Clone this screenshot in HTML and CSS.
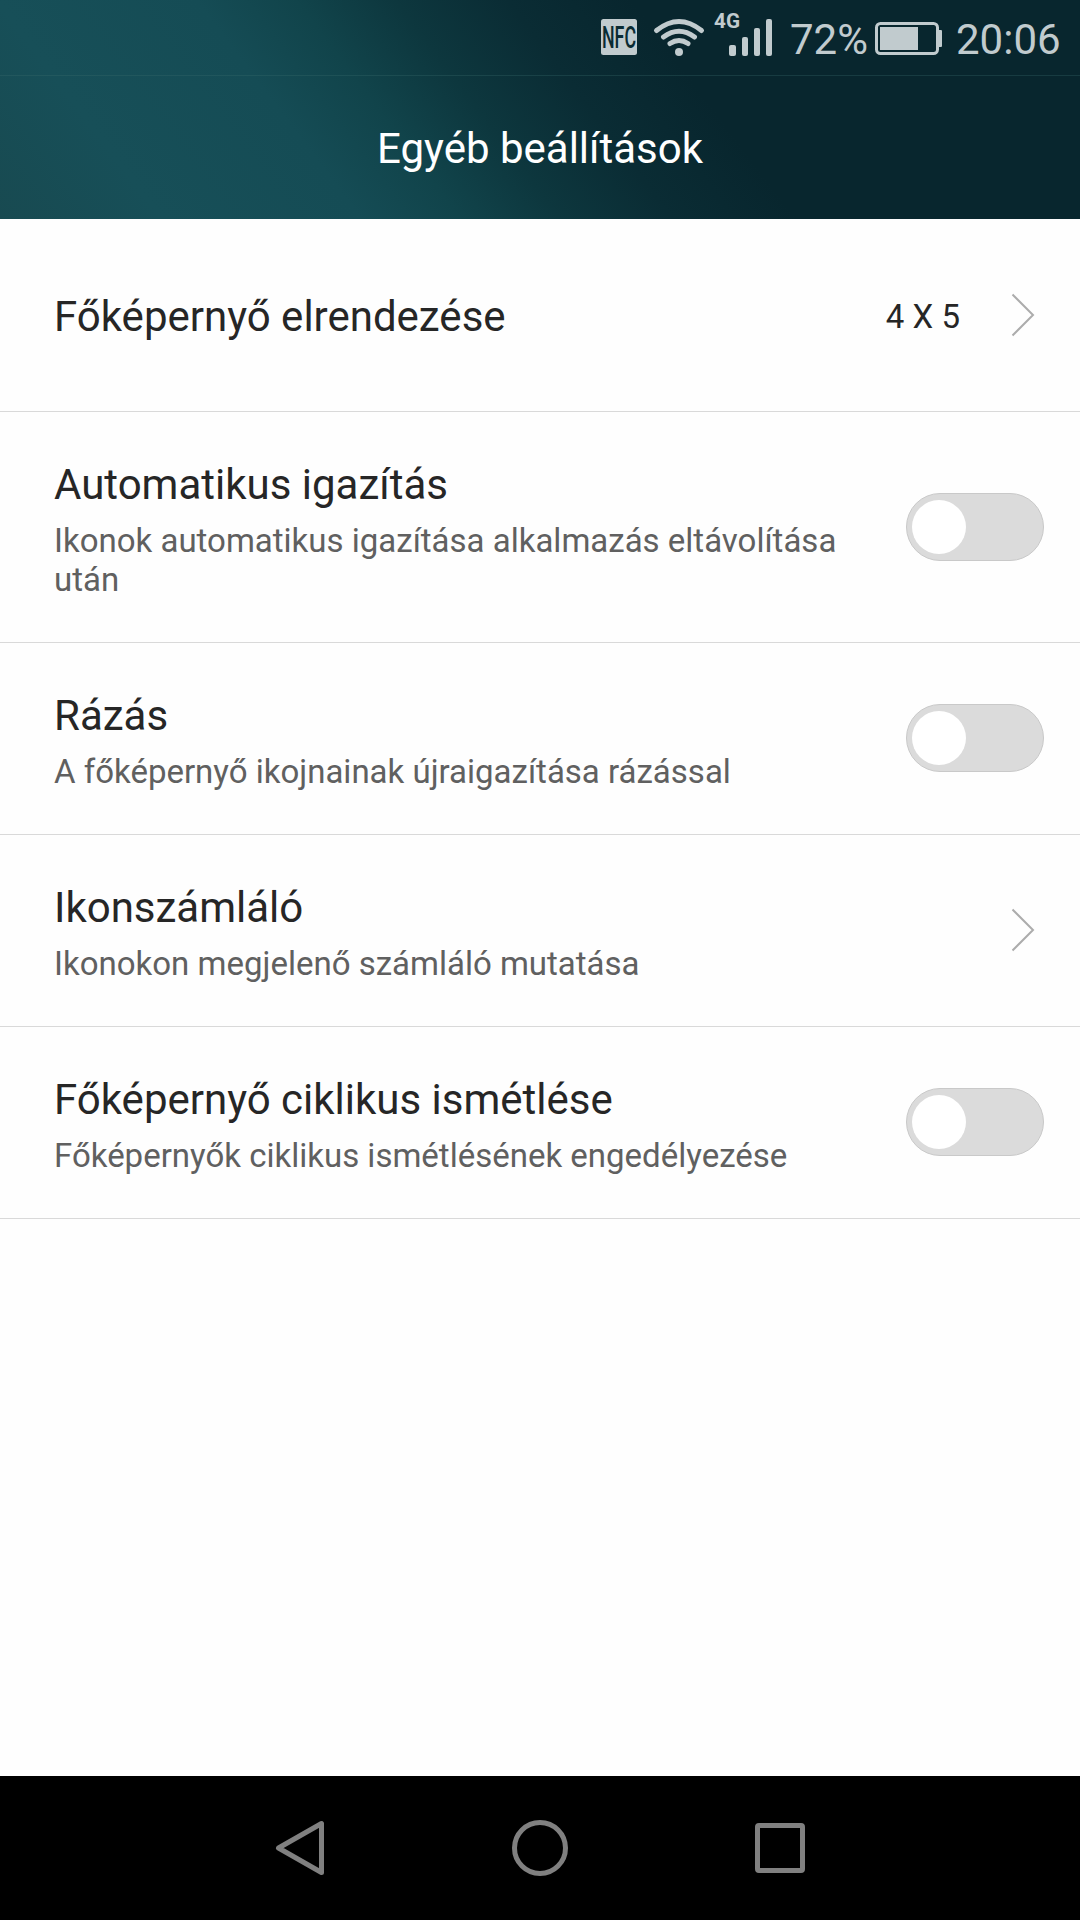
FILE: index.html
```html
<!DOCTYPE html>
<html lang="hu">
<head>
    <meta charset="UTF-8">
    <meta name="viewport" content="width=device-width, initial-scale=1.0">
    <title>Egyéb beállítások</title>
    <link rel="stylesheet" href="styles.css">
</head>
<body>
    <header class="header">
        <div class="status-bar">
            <svg class="status-icons" width="171" height="54" viewBox="601 3 171 54">
                <!-- NFC -->
                <rect x="601" y="19" width="36" height="36" rx="2.5" fill="#c1cbce"/>
                <text class="nfc" x="602" y="48" textLength="34" lengthAdjust="spacingAndGlyphs">NFC</text>
                <!-- wifi -->
                <g fill="none" stroke="#c1cbce" stroke-width="5" stroke-linecap="round">
                    <path d="M656.5 30.5Q679 12.5 701.5 30.5"/>
                    <path d="M663.5 37Q679 25.5 694.5 37"/>
                    <path d="M670 43.5Q679 37.5 688 43.5"/>
                </g>
                <circle cx="679" cy="52" r="4" fill="#c1cbce"/>
                <!-- signal -->
                <text class="net" x="714" y="28" textLength="26" lengthAdjust="spacingAndGlyphs">4G</text>
                <g fill="#c1cbce">
                    <rect x="729" y="45" width="7" height="11" rx="2"/>
                    <rect x="742" y="37" width="6" height="19" rx="2"/>
                    <rect x="754" y="28" width="6" height="28" rx="2"/>
                    <rect x="766" y="19" width="6" height="37" rx="2"/>
                </g>
            </svg>
            <span class="percent">72%</span>
            <svg class="battery" width="67" height="33" viewBox="0 0 67 33">
                <rect x="1.5" y="1.5" width="61" height="30" rx="4" fill="none" stroke="#c1cbce" stroke-width="3"/>
                <rect x="5" y="5" width="38" height="23" fill="#c1cbce"/>
                <rect x="63" y="8" width="4" height="17" rx="1" fill="#c1cbce"/>
            </svg>
            <span class="clock">20:06</span>
        </div>
        <h1>Egyéb beállítások</h1>
    </header>

    <main class="settings">
        <div class="row row-single">
            <div class="label">
                <h2>Főképernyő elrendezése</h2>
            </div>
            <span class="value">4 X 5</span>
            <svg class="chevron" width="24" height="44" viewBox="0 0 24 44"><path d="M1.5 1.5L22 22L1.5 42.5"/></svg>
        </div>
        <div class="row row-tall">
            <div class="label">
                <h2>Automatikus igazítás</h2>
                <p>Ikonok automatikus igazítása alkalmazás eltávolítása után</p>
            </div>
            <div class="toggle"><div class="knob"></div></div>
        </div>
        <div class="row">
            <div class="label">
                <h2>Rázás</h2>
                <p>A főképernyő ikojnainak újraigazítása rázással</p>
            </div>
            <div class="toggle"><div class="knob"></div></div>
        </div>
        <div class="row">
            <div class="label">
                <h2>Ikonszámláló</h2>
                <p>Ikonokon megjelenő számláló mutatása</p>
            </div>
            <svg class="chevron" width="24" height="44" viewBox="0 0 24 44"><path d="M1.5 1.5L22 22L1.5 42.5"/></svg>
        </div>
        <div class="row">
            <div class="label">
                <h2>Főképernyő ciklikus ismétlése</h2>
                <p>Főképernyők ciklikus ismétlésének engedélyezése</p>
            </div>
            <div class="toggle"><div class="knob"></div></div>
        </div>
    </main>

    <nav class="nav-bar">
        <svg width="60" height="60" viewBox="0 0 60 60"><path d="M51.5 5.5V54.5L8.5 30Z"/></svg>
        <svg width="60" height="60" viewBox="0 0 60 60"><circle cx="30" cy="30" r="25.5"/></svg>
        <svg width="60" height="60" viewBox="0 0 60 60"><rect x="7.5" y="7.5" width="45" height="45" rx="1.5"/></svg>
    </nav>
</body>
</html>
```
FILE: styles.css
```css
* {
    box-sizing: border-box;
}

body {
    font-family: Roboto, "Noto Sans", sans-serif;
    background-color: #fefefe;
    display: flex;
    flex-direction: column;
    height: 1920px;
    margin: 0;
}

h1, h2, p {
    margin: 0;
    font-weight: 400;
}

/* header */
.header {
    height: 219px;
    background: linear-gradient(53deg, #184a51 0%, #174f58 13%, #154c55 29%, #11444b 37%, #0d373e 45%, #0a2c34 54%, #08262e 64%, #08262e 100%);
    color: white;
}

.status-bar {
    display: flex;
    height: 76px;
    padding: 3px 17px 0 0;
    justify-content: flex-end;
    align-items: flex-start;
    border-bottom: 1px solid rgba(60, 110, 110, 0.3);
    color: #c1cbce;
    font-size: 42px;
    line-height: 49px;
}

.percent {
    width: 80px;
    margin: 12px 0 0 18px;
    white-space: nowrap;
}

.battery {
    margin: 19px 0 0 5px;
}

.clock {
    width: 107px;
    margin: 12px 0 0 14px;
    white-space: nowrap;
}

.nfc {
    font-size: 31px;
    font-weight: 500;
    fill: #0a2b33;
}

.net {
    font-size: 20px;
    font-weight: 700;
    fill: #c1cbce;
}

h1 {
    padding-top: 48px;
    font-size: 42px;
    line-height: 49px;
    text-align: center;
}

/* list */
.settings {
    flex: 1;
}

.row {
    display: flex;
    align-items: center;
    height: 192px;
    padding: 0 36px 1px 54px;
    border-bottom: 1px solid #d9d9d9;
}

.row-single {
    height: 193px;
    padding-bottom: 0;
}

.row-tall {
    height: 231px;
    padding-bottom: 0;
}

.label {
    flex: 1;
    padding-top: 6px;
}

.row-single .label {
    padding-top: 3px;
}

.row-tall .label {
    padding-top: 4px;
}

h2 {
    color: #262626;
    font-size: 42px;
    line-height: 49px;
}

p {
    width: 800px;
    margin-top: 12px;
    color: #606060;
    font-size: 33px;
    line-height: 39px;
}

.value {
    margin-right: 51px;
    padding-top: 2px;
    color: #262626;
    font-size: 33px;
    line-height: 39px;
}

.chevron {
    margin-right: 9px;
    fill: none;
    stroke: #acacac;
    stroke-width: 2;
}

.toggle {
    width: 138px;
    height: 68px;
    padding: 6px 5px;
    border: 1px solid #c9c9c9;
    border-radius: 34px;
    background-color: #dbdbdb;
}

.knob {
    width: 54px;
    height: 54px;
    border-radius: 50%;
    background-color: white;
}

/* bottom keys */
.nav-bar {
    display: flex;
    justify-content: center;
    align-items: center;
    gap: 180px;
    height: 144px;
    background-color: black;
}

.nav-bar svg {
    fill: none;
    stroke: #808080;
    stroke-width: 5;
    stroke-linejoin: round;
}
```
